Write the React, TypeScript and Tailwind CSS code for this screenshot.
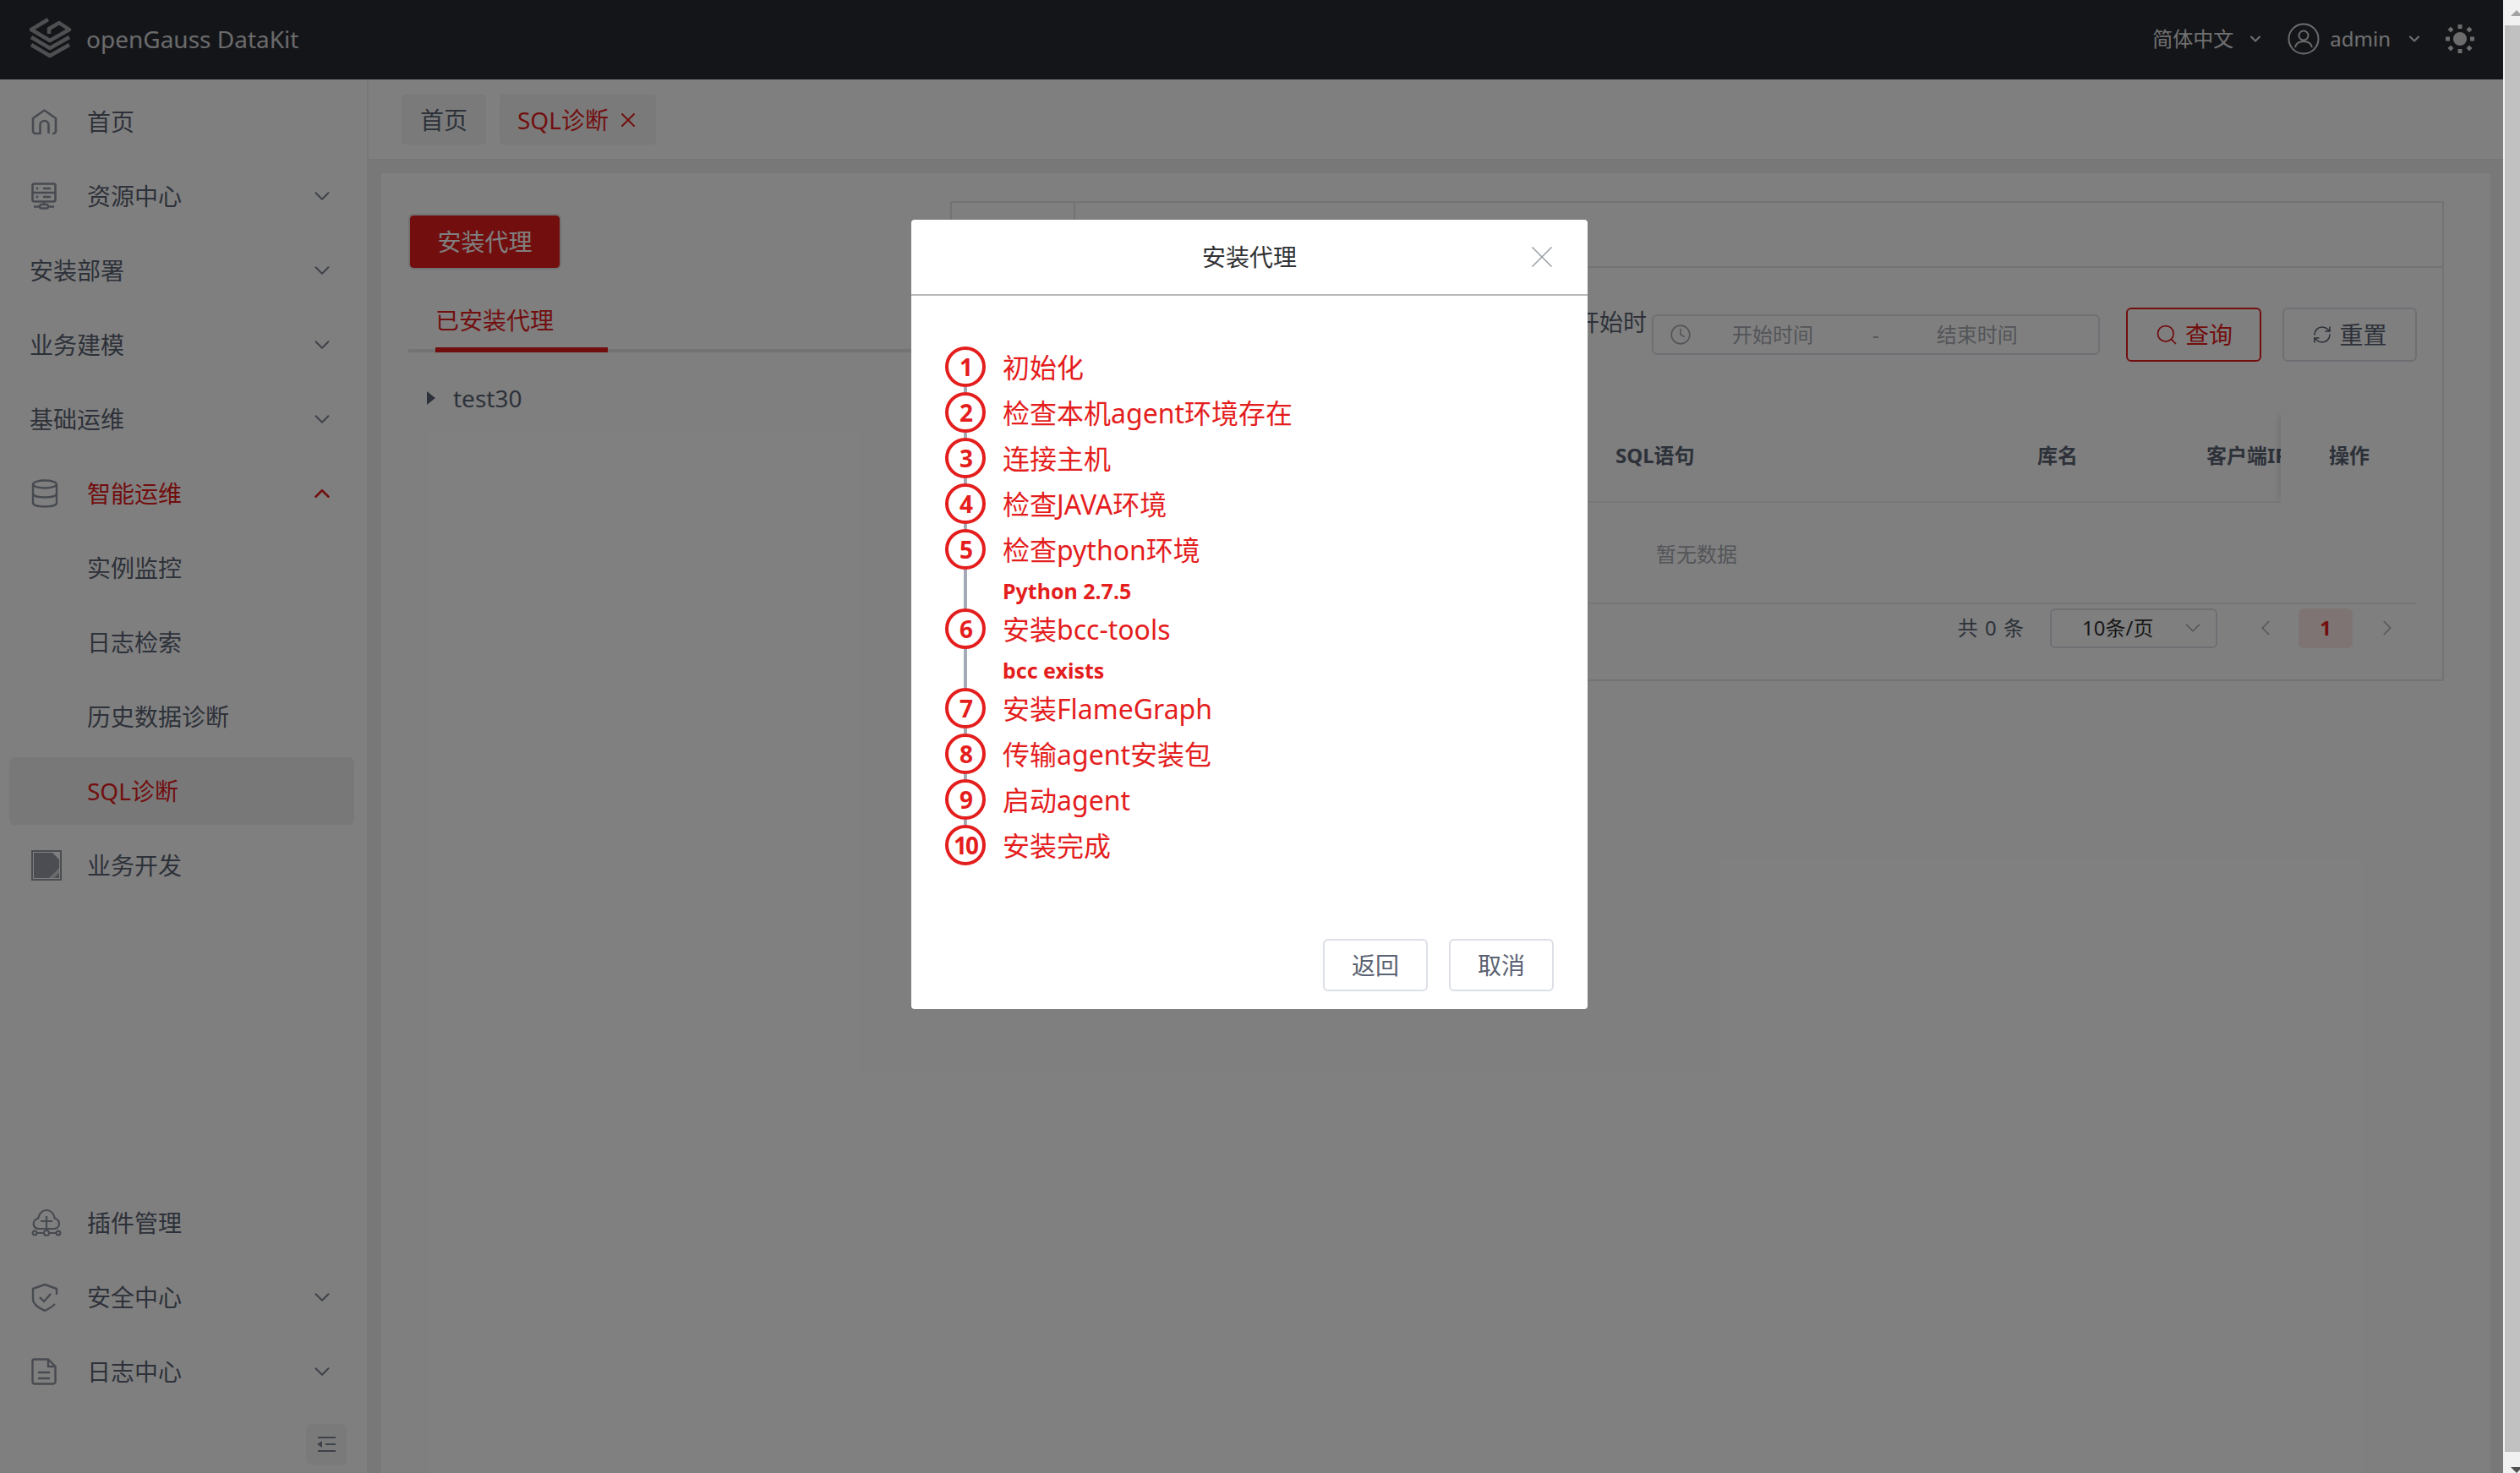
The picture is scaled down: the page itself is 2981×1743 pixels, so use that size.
import { ChevronDown, ChevronUp, ChevronLeft, ChevronRight, X, Search, RefreshCw, Clock } from 'lucide-react'

const font = 'font-["Noto_Sans","Noto_Sans_CJK_SC",sans-serif]'
const iconStroke = '#8f95a1'

function Logo() {
  return (
    <svg width="50" height="50" viewBox="0 0 50 50" fill="none" stroke="#fdfdfd" strokeOpacity="0.55" strokeWidth="4.5" strokeLinejoin="round">
      <path d="M22 2 L2 14 L24 27 L47 14 L35 6 L23 13 V19" />
      <path d="M2 23 L24 36 L47 23" />
      <path d="M2 32 L24 45 L47 32" />
    </svg>
  )
}

function HomeIcon() {
  return (
    <svg width="31" height="31" viewBox="0 0 31 31" fill="none" stroke={iconStroke} strokeWidth="2.6" strokeLinejoin="round">
      <path d="M25 29 H26 a3 3 0 0 0 3 -3 V11 L15.5 1.5 L2 11 V26 a3 3 0 0 0 3 3 H10.5 V19 a5 5 0 0 1 10 0 V29" />
    </svg>
  )
}

function ServerIcon() {
  return (
    <svg width="30" height="32" viewBox="0 0 30 32" fill="none" stroke={iconStroke} strokeWidth="2.6">
      <rect x="1.5" y="1.5" width="27" height="21" rx="2" />
      <path d="M1.5 12 H28.5 M14 7 H23 M14 17 H23 M15 23 V26" />
      <circle cx="7" cy="7" r="1.4" fill={iconStroke} stroke="none" />
      <circle cx="7" cy="17" r="1.4" fill={iconStroke} stroke="none" />
      <rect x="10" y="26" width="10" height="4.5" rx="2.2" />
      <path d="M3 28.5 H10 M20 28.5 H27" />
    </svg>
  )
}

function DbIcon() {
  return (
    <svg width="32" height="34" viewBox="0 0 32 34" fill="none" stroke={iconStroke} strokeWidth="2.4">
      <ellipse cx="16" cy="6" rx="14" ry="4.5" />
      <path d="M2 6 V28 C2 31 9 32.5 16 32.5 C23 32.5 30 31 30 28 V6" />
      <path d="M2 17 C2 20 9 21.5 16 21.5 C23 21.5 30 20 30 17" />
    </svg>
  )
}

function DevIcon() {
  return (
    <svg width="36" height="36" viewBox="0 0 36 36">
      <rect x="1" y="1" width="34" height="34" fill="none" stroke="#969ba5" strokeWidth="2" />
      <path d="M3 3 H25 L33 11 V33 H3 Z" fill="#969ba5" />
      <path d="M21 33 L33 21 V27 L27 33 Z" fill="#d4d4d4" />
    </svg>
  )
}

function PluginIcon() {
  return (
    <svg width="36" height="34" viewBox="0 0 36 34" fill="none" stroke={iconStroke} strokeWidth="2.2">
      <path d="M9 24 C3 24 2 19 3 16 C4 13 7 12 8 12 C9 6 13 2 18 2 C23 2 27 6 28 12 C30 12 33 14 33 18 C33 22 30 24 27 24 H9 Z" />
      <path d="M18 9 V27 M11 15 H25" />
      <circle cx="18" cy="29" r="3" />
      <circle cx="4" cy="29" r="2.4" />
      <circle cx="32" cy="29" r="2.4" />
      <path d="M6 29 H15 M21 29 H30" />
    </svg>
  )
}

function ShieldIcon() {
  return (
    <svg width="32" height="34" viewBox="0 0 32 34" fill="none" stroke={iconStroke} strokeWidth="2.4">
      <path d="M30 14 V7 L16 2 L2 7 V19 C2 26 10 30 16 33 C20 31 25 28 28 25" strokeLinejoin="round" />
      <path d="M10 17 L15 22 L23 13" />
    </svg>
  )
}

function DocIcon() {
  return (
    <svg width="30" height="32" viewBox="0 0 30 32" fill="none" stroke={iconStroke} strokeWidth="2.4">
      <path d="M3 1.5 H20 L28.5 10 V28 a2.5 2.5 0 0 1 -2.5 2.5 H4 a2.5 2.5 0 0 1 -2.5 -2.5 V3 a1.5 1.5 0 0 1 1.5 -1.5 Z" />
      <path d="M20 2 V10 H28 M8 17 H22 M8 24 H22" />
    </svg>
  )
}

function SideItem({
  label,
  icon,
  arrow,
  active,
  indent,
}: {
  label: string
  icon?: React.ReactNode
  arrow?: 'up' | 'down'
  active?: boolean
  indent?: boolean
}) {
  return (
    <div className={`flex h-[88px] items-center pr-[38px] text-[28px] ${active ? 'text-[#e41d1d]' : 'text-[#5a6373]'}`}>
      {icon && <div className="ml-[37px] flex w-[66px] items-center">{icon}</div>}
      <span className={indent ? 'ml-[103px]' : icon ? '' : 'ml-[35px]'}>{label}</span>
      {arrow === 'down' && <ChevronDown className="ml-auto text-[#7c8492]" size={30} strokeWidth={1.6} />}
      {arrow === 'up' && <ChevronUp className="ml-auto text-[#e41d1d]" size={30} strokeWidth={2} />}
    </div>
  )
}

function Sidebar() {
  return (
    <div className="flex h-[1649px] w-[436px] shrink-0 flex-col border-r-2 border-[#eeeeee] bg-white pt-[6px]">
      <SideItem label="首页" icon={<HomeIcon />} />
      <SideItem label="资源中心" icon={<ServerIcon />} arrow="down" />
      <SideItem label="安装部署" arrow="down" />
      <SideItem label="业务建模" arrow="down" />
      <SideItem label="基础运维" arrow="down" />
      <SideItem label="智能运维" icon={<DbIcon />} arrow="up" active />
      <SideItem label="实例监控" indent />
      <SideItem label="日志检索" indent />
      <SideItem label="历史数据诊断" indent />
      <div className="my-[4px] mr-[15px] ml-[11px] flex h-[80px] items-center rounded-[6px] bg-[#f0f0f0] pl-[92px] text-[28px] text-[#e41d1d]">
        SQL诊断
      </div>
      <SideItem label="业务开发" icon={<DevIcon />} />
      <div className="mt-auto">
        <SideItem label="插件管理" icon={<PluginIcon />} />
        <SideItem label="安全中心" icon={<ShieldIcon />} arrow="down" />
        <SideItem label="日志中心" icon={<DocIcon />} arrow="down" />
        <div className="flex h-[76px] justify-end pt-[18px] pr-[24px]">
          <div className="flex h-[48px] w-[48px] items-center justify-center rounded-[6px] bg-[#f5f5f5]">
            <svg width="24" height="20" viewBox="0 0 24 20" fill="none" stroke="#7c8492" strokeWidth="2">
              <path d="M2 2 H23 M11 10 H23 M2 18 H23" />
              <path d="M7 6 V14 L1 10 Z" fill="#7c8492" stroke="none" />
            </svg>
          </div>
        </div>
      </div>
    </div>
  )
}

function LeftPanel() {
  return (
    <div className="w-[673px] shrink-0 pt-[50px] pl-[32px]">
      <button className="ml-[2px] h-[62px] w-[177px] rounded-[4px] bg-[#e41d1d] text-[28px] text-white outline-2 outline-[#e5e5e5]">
        安装代理
      </button>
      <div className="mt-[35px] flex h-[65px] border-b-[4px] border-[#e5e6eb]">
        <div className="relative ml-[32px] h-[65px] w-[204px] border-b-[6px] border-[#e41d1d] pt-[6px] text-[28px] text-[#e41d1d]">
          已安装代理
        </div>
      </div>
      <div className="mt-[33px] flex items-center pl-[22px] text-[28px] text-[#5a6373]">
        <div className="h-0 w-0 border-y-[8px] border-l-[10px] border-y-transparent border-l-[#5a6373]" />
        <span className="ml-[21px]">test30</span>
      </div>
    </div>
  )
}

function RightPanel() {
  return (
    <div className="mt-[33px] mb-[140px] h-[568px] w-[1767px] shrink-0 overflow-hidden border-2 border-[#e5e6eb]">
      <div className="flex h-[77px] border-b-2 border-[#e5e6eb]">
        <div className="w-[146px] border-r-2 border-[#e5e6eb]" />
      </div>
      <div className="relative h-[487px] pr-[30px]">
        <div className="flex h-[112px] items-start justify-end pt-[47px]">
          <span className="-mt-[4px] mr-[6px] text-[28px] text-[#5a6373]">开始时</span>
          <div className="mt-[8px] mr-[31px] flex h-[48px] w-[530px] items-center rounded-[6px] border-2 border-[#dcdfe6] pl-[19px] text-[24px] text-[#a8abb2]">
            <Clock size={26} strokeWidth={1.5} />
            <span className="ml-[48px]">开始时间</span>
            <span className="ml-[70px]">-</span>
            <span className="ml-[68px]">结束时间</span>
          </div>
          <button className="flex h-[64px] w-[160px] items-center justify-center gap-[8px] rounded-[6px] border-2 border-[#e41d1d] text-[28px] text-[#e41d1d]">
            <Search size={28} strokeWidth={1.5} />
            查询
          </button>
          <button className="ml-[25px] flex h-[64px] w-[159px] items-center justify-center gap-[8px] rounded-[6px] border-2 border-[#dcdfe6] text-[28px] text-[#5a6373]">
            <RefreshCw size={24} strokeWidth={1.6} />
            重置
          </button>
        </div>

        <div className="mt-[56px] ml-[700px] flex h-[110px] items-center border-b-2 border-[#eeeeee] text-[24px] font-bold text-[#5a6373]">
          <span className="ml-[85px]">SQL语句</span>
        </div>
        <div className="ml-[700px] flex h-[120px] items-center border-b-2 border-[#eeeeee] pt-[4px] text-[24px] text-[#a8abb2]">
          <span className="ml-[133px]">暂无数据</span>
        </div>

        <div className="absolute top-[170px] left-[1284px] h-[110px] w-[90px] overflow-hidden pt-[34px] text-[24px] font-bold whitespace-nowrap text-[#5a6373]">
          库名
        </div>
        <div className="absolute top-[170px] left-[1484px] h-[110px] w-[88px] overflow-hidden pt-[34px] text-[24px] font-bold whitespace-nowrap text-[#5a6373]">
          客户端IP
        </div>
        <div className="absolute top-[170px] left-[1572px] h-[108px] w-[161px] bg-white pt-[34px] pl-[57px] text-[24px] font-bold text-[#5a6373] shadow-[-6px_0_8px_-4px_rgba(0,0,0,0.12)]">
          操作
        </div>

        <div className="flex h-[52px] items-center justify-end pt-[4px] pr-[20px] text-[24px] text-[#5a6373]">
          <span className="tracking-[1px]">共 0 条</span>
          <div className="ml-[30px] flex h-[47px] w-[198px] items-center rounded-[6px] border-2 border-[#dcdfe6] pr-[12px] pl-[36px] text-[#303133]">
            10条/页
            <ChevronDown className="ml-auto text-[#a8abb2]" size={30} strokeWidth={1.3} />
          </div>
          <ChevronLeft className="ml-[42px] text-[#a8abb2]" size={30} strokeWidth={1.3} />
          <div className="ml-[24px] flex h-[47px] w-[64px] items-center justify-center rounded-[6px] bg-[#fce8e8] font-bold text-[#e41d1d]">
            1
          </div>
          <ChevronRight className="ml-[26px] text-[#a8abb2]" size={30} strokeWidth={1.3} />
        </div>
      </div>
    </div>
  )
}

type Step = { n: number; label: string; desc?: string }

const steps: Step[] = [
  { n: 1, label: '初始化' },
  { n: 2, label: '检查本机agent环境存在' },
  { n: 3, label: '连接主机' },
  { n: 4, label: '检查JAVA环境' },
  { n: 5, label: '检查python环境', desc: 'Python 2.7.5' },
  { n: 6, label: '安装bcc-tools', desc: 'bcc exists' },
  { n: 7, label: '安装FlameGraph' },
  { n: 8, label: '传输agent安装包' },
  { n: 9, label: '启动agent' },
  { n: 10, label: '安装完成' },
]

function Stepper() {
  return (
    <div className="flex flex-col">
      {steps.map((s, i) => (
        <div key={s.n} className="flex">
          <div className="flex w-[48px] shrink-0 flex-col items-center">
            <div className="flex h-[48px] w-[48px] items-center justify-center rounded-full border-[4px] border-[#e41d1d] text-[28px] leading-none font-bold tracking-[-2px] text-[#e41d1d]">
              {s.n}
            </div>
            {i < steps.length - 1 && <div className="w-[4px] grow bg-[#a5abb6]" />}
          </div>
          <div className={`ml-[20px] ${i < steps.length - 1 ? 'pb-[6px]' : ''} text-[#e41d1d]`}>
            <div className="h-[48px] text-[32px] leading-[50px] whitespace-nowrap">{s.label}</div>
            {s.desc && <div className="h-[40px] text-[25px] leading-[50px] font-bold">{s.desc}</div>}
          </div>
        </div>
      ))}
    </div>
  )
}

function Modal() {
  return (
    <div className="absolute top-[260px] left-[1078px] flex h-[934px] w-[800px] flex-col rounded-[4px] bg-white">
      <div className="relative flex h-[90px] shrink-0 items-center justify-center border-b-2 border-[#b9b9b9] text-[28px] text-[#303133]">
        安装代理
        <X className="absolute right-[32px] text-[#9aa0a8]" size={44} strokeWidth={0.9} />
      </div>
      <div className="pt-[60px] pl-[40px]">
        <Stepper />
      </div>
      <div className="mt-auto flex justify-end gap-[25px] pr-[40px] pb-[21px]">
        <button className="h-[62px] w-[124px] rounded-[6px] border-2 border-[#dcdfe6] text-[28px] text-[#5a6373]">返回</button>
        <button className="h-[62px] w-[124px] rounded-[6px] border-2 border-[#dcdfe6] text-[28px] text-[#5a6373]">取消</button>
      </div>
    </div>
  )
}

export default function App() {
  return (
    <div className={`flex h-[1743px] w-[2981px] overflow-hidden bg-white ${font}`}>
      <div className="relative h-full w-[2961px] shrink-0">
        <header className="flex h-[94px] items-center bg-[#282a33] pr-[34px] pb-[2px] pl-[35px] text-[#e0e0e0]">
          <Logo />
          <span className="ml-[17px] text-[28px] text-[#ffffff]/80">openGauss DataKit</span>
          <span className="ml-auto text-[24px]">简体中文</span>
          <ChevronDown className="ml-[16px]" size={20} strokeWidth={2.5} />
          <svg className="ml-[28px]" width="38" height="38" viewBox="0 0 38 38" fill="none" stroke="#d8d8d8" strokeWidth="2">
            <circle cx="19" cy="19" r="17.5" />
            <circle cx="19" cy="15" r="5.5" />
            <path d="M9 29 C10 24 14 22 19 22 C24 22 28 24 29 29" />
          </svg>
          <span className="ml-[12px] text-[24px]">admin</span>
          <ChevronDown className="ml-[18px]" size={20} strokeWidth={2.5} />
          <svg className="ml-[27px]" width="34" height="34" viewBox="0 0 34 34" fill="#d8d8d8">
            <circle cx="17" cy="17" r="8" />
            <rect x="14.5" y="0" width="5" height="5" />
            <rect x="14.5" y="29" width="5" height="5" />
            <rect x="0" y="14.5" width="5" height="5" />
            <rect x="29" y="14.5" width="5" height="5" />
            <rect x="3.5" y="3.5" width="5" height="5" transform="rotate(45 6 6)" />
            <rect x="25.5" y="3.5" width="5" height="5" transform="rotate(45 28 6)" />
            <rect x="3.5" y="25.5" width="5" height="5" transform="rotate(45 6 28)" />
            <rect x="25.5" y="25.5" width="5" height="5" transform="rotate(45 28 28)" />
          </svg>
        </header>
        <div className="flex">
          <Sidebar />
          <div className="min-w-0 grow">
            <div className="flex h-[96px] items-start gap-[16px] border-b-2 border-[#eeeeee] bg-white pt-[18px] pl-[39px] text-[28px]">
              <div className="flex h-[59px] w-[100px] items-center justify-center rounded-[4px] bg-[#f5f5f5] text-[#5a6373]">首页</div>
              <div className="flex h-[59px] w-[185px] items-center gap-[9px] rounded-[4px] bg-[#f5f5f5] pl-[21px] text-[#e41d1d]">
                SQL诊断
                <X size={28} strokeWidth={1.6} />
              </div>
            </div>
            <div className="h-[1553px] bg-[#f0f0f0] px-[15px] pt-[15px]">
              <div className="flex h-[1538px] bg-white">
                <LeftPanel />
                <RightPanel />
              </div>
            </div>
          </div>
        </div>
        <div className="absolute inset-0 bg-black/50" />
        <Modal />
      </div>
      <div className="flex w-[20px] shrink-0 flex-col bg-[#f1f1f1]">
        <div className="flex h-[30px] items-center pl-[9px]">
          <div className="h-0 w-0 border-x-[7px] border-b-[7px] border-x-transparent border-b-[#a3a3a3]" />
        </div>
        <div className="ml-[2px] h-[1688px] bg-[#c1c1c1]" />
        <div className="flex grow items-end pl-[9px]">
          <div className="h-0 w-0 border-x-[7px] border-t-[7px] border-x-transparent border-t-[#505050]" />
        </div>
      </div>
    </div>
  )
}
